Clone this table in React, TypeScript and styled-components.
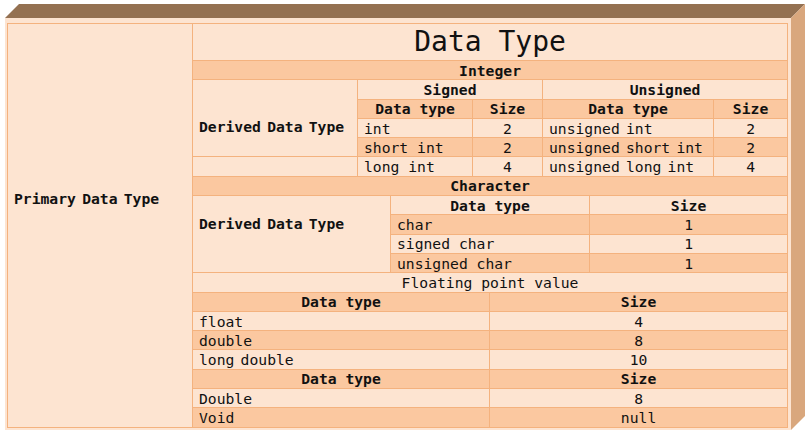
import styled, { createGlobalStyle, css } from "styled-components";

const GlobalStyle = createGlobalStyle`
  html, body {
    margin: 0;
    padding: 0;
    background: #ffffff;
  }
  body {
    font-family: "DejaVu Sans Mono", "Liberation Mono", monospace;
    color: #111;
  }
`;

const Frame = styled.div`
  position: relative;
  box-sizing: border-box;
  width: 786px;
  margin: 18px 0 0 5px;
  padding: 5px 3px 2px 2px;
  background: #fde4d1;

  &::before {
    content: "";
    position: absolute;
    left: 0;
    top: -14px;
    width: 100%;
    height: 14px;
    background: #947152;
    transform: skewX(-45deg);
    transform-origin: bottom left;
  }

  &::after {
    content: "";
    position: absolute;
    top: 0;
    right: -14px;
    width: 14px;
    height: 100%;
    background: #d9a77d;
    transform: skewY(-45deg);
    transform-origin: top left;
  }
`;

const Table = styled.table`
  width: 781px;
  border-collapse: collapse;
  table-layout: fixed;
  font-size: 14.7px;
  line-height: 17px;
  border: 1px solid #f4b27e;
`;

const Row = styled.tr<{ tall?: boolean }>`
  height: ${(p) => (p.tall ? "37px" : "19.3px")};
  background: #fde4d1;

  &:nth-child(even) {
    background: #fbc8a0;
  }
`;

interface ICell {
  head?: boolean;
  center?: boolean;
  tight?: boolean;
  title?: boolean;
}

const Cell = styled.td<ICell>`
  border: 1px solid #f4b27e;
  padding: 0 6px;
  vertical-align: middle;
  white-space: nowrap;
  overflow: hidden;
  text-align: ${(p) => (p.center ? "center" : "left")};
  font-weight: ${(p) => (p.head ? 700 : 400)};
  ${(p) =>
    p.tight &&
    css`
      word-spacing: -2.6px;
    `}
  ${(p) =>
    p.title &&
    css`
      font-size: 28px;
      line-height: 32px;
      text-align: center;
    `}
`;

// label cells that span several rows; shift moves the text off the middle
const Side = styled(Cell)<{ shift: number }>`
  background: #fde4d1;
  padding-top: ${(p) => (p.shift > 0 ? p.shift * 2 : 0)}px;
  padding-bottom: ${(p) => (p.shift < 0 ? -p.shift * 2 : 0)}px;
`;

const widths = [185, 165, 33, 82, 17, 53, 47, 124, 74];

const integers = [
  ["int", "2", "unsigned int", "2"],
  ["short int", "2", "unsigned short int", "2"],
];

const chars = ["char", "signed char", "unsigned char"];

const floats = [
  ["float", "4"],
  ["double", "8"],
  ["long double", "10"],
];

const others = [
  ["Double", "8"],
  ["Void", "null"],
];

const App = () => {
  return (
    <>
      <GlobalStyle />
      <Frame>
        <Table>
          <colgroup>
            {widths.map((w, i) => (
              <col key={i} style={{ width: w }} />
            ))}
          </colgroup>
          <tbody>
            <Row tall>
              <Side rowSpan={20} head tight shift={-27}>
                Primary Data Type
              </Side>
              <Cell colSpan={8} title>
                Data Type
              </Cell>
            </Row>
            <Row>
              <Cell colSpan={8} head center>
                Integer
              </Cell>
            </Row>
            <Row>
              <Side rowSpan={4} head tight shift={8}>
                Derived Data Type
              </Side>
              <Cell colSpan={4} head center>
                Signed
              </Cell>
              <Cell colSpan={3} head center>
                Unsigned
              </Cell>
            </Row>
            <Row>
              <Cell colSpan={2} head center>
                Data type
              </Cell>
              <Cell colSpan={2} head center>
                Size
              </Cell>
              <Cell colSpan={2} head center>
                Data type
              </Cell>
              <Cell head center>
                Size
              </Cell>
            </Row>
            {integers.map((r) => (
              <Row key={r[0]}>
                <Cell colSpan={2}>{r[0]}</Cell>
                <Cell colSpan={2} center>
                  {r[1]}
                </Cell>
                <Cell colSpan={2} tight>
                  {r[2]}
                </Cell>
                <Cell center>{r[3]}</Cell>
              </Row>
            ))}
            <Row>
              <Cell></Cell>
              <Cell colSpan={2}>long int</Cell>
              <Cell colSpan={2} center>
                4
              </Cell>
              <Cell colSpan={2} tight>
                unsigned long int
              </Cell>
              <Cell center>4</Cell>
            </Row>
            <Row>
              <Cell colSpan={8} head center>
                Character
              </Cell>
            </Row>
            <Row>
              <Side rowSpan={4} colSpan={2} head tight shift={-11}>
                Derived Data Type
              </Side>
              <Cell colSpan={4} head center>
                Data type
              </Cell>
              <Cell colSpan={2} head center>
                Size
              </Cell>
            </Row>
            {chars.map((c) => (
              <Row key={c}>
                <Cell colSpan={4}>{c}</Cell>
                <Cell colSpan={2} center>
                  1
                </Cell>
              </Row>
            ))}
            <Row>
              <Cell colSpan={8} center>
                Floating point value
              </Cell>
            </Row>
            <Row>
              <Cell colSpan={4} head center>
                Data type
              </Cell>
              <Cell colSpan={4} head center>
                Size
              </Cell>
            </Row>
            {floats.map((f) => (
              <Row key={f[0]}>
                <Cell colSpan={4} tight>
                  {f[0]}
                </Cell>
                <Cell colSpan={4} center>
                  {f[1]}
                </Cell>
              </Row>
            ))}
            <Row>
              <Cell colSpan={4} head center>
                Data type
              </Cell>
              <Cell colSpan={4} head center>
                Size
              </Cell>
            </Row>
            {others.map((o) => (
              <Row key={o[0]}>
                <Cell colSpan={4}>{o[0]}</Cell>
                <Cell colSpan={4} center>
                  {o[1]}
                </Cell>
              </Row>
            ))}
          </tbody>
        </Table>
      </Frame>
    </>
  );
};

export default App;
